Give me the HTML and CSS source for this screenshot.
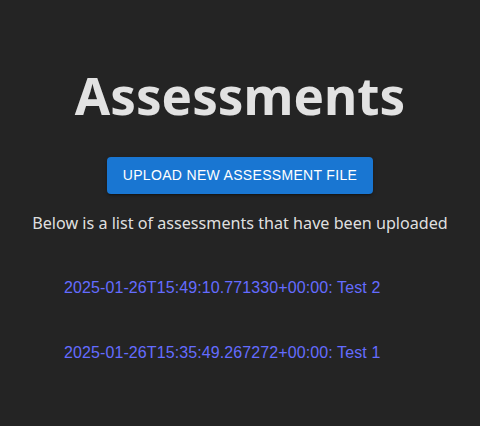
FILE: index.html
```html
<!DOCTYPE html>
<html lang="en">
<head>
<meta charset="utf-8">
<title>Assessments</title>
<link rel="stylesheet" href="styles.css">
</head>
<body>
<div class="root">
  <h1 class="title">Assessments</h1>
  <button class="upload-btn" type="button">Upload new assessment file</button>
  <p class="intro">Below is a list of assessments that have been uploaded</p>
  <ul class="assessment-list">
    <li><a class="assessment-link" href="#">2025-01-26T15:49:10.771330+00:00: Test 2</a></li>
    <li><a class="assessment-link" href="#">2025-01-26T15:35:49.267272+00:00: Test 1</a></li>
  </ul>
</div>
</body>
</html>
```
FILE: styles.css
```css
html, body {
  margin: 0;
  padding: 0;
}
body {
  background: #242424;
  color: rgba(255, 255, 255, 0.87);
  font-family: "Noto Sans", sans-serif;
  font-size: 16px;
  line-height: 1.5;
  min-height: 426px;
}
.root {
  padding: 67px 32px 0;
  display: flex;
  flex-direction: column;
  align-items: center;
}
.title {
  margin: 0;
  font-size: 51.2px;
  line-height: 1.1;
  font-weight: 700;
}
.upload-btn {
  margin-top: 34px;
  background: #1976d2;
  color: #fff;
  border: none;
  border-radius: 4px;
  padding: 6px 16px;
  font-family: "Liberation Sans", Arial, sans-serif;
  font-weight: 400;
  font-size: 14px;
  line-height: 1.75;
  letter-spacing: 0.32px;
  text-transform: uppercase;
  box-shadow: 0 3px 1px -2px rgba(0,0,0,0.2), 0 2px 2px 0 rgba(0,0,0,0.14), 0 1px 5px 0 rgba(0,0,0,0.12);
  cursor: pointer;
}
.intro {
  margin: 17px 0 0;
  font-size: 16.15px;
}
.assessment-list {
  align-self: stretch;
  list-style: none;
  margin: 40px 0 0;
  padding: 0 0 0 32px;
  display: flex;
  flex-direction: column;
  gap: 40px;
}
.assessment-link {
  font-family: "Liberation Sans", Arial, sans-serif;
  color: #646cff;
  text-decoration: none;
  letter-spacing: 0.1px;
}
```
